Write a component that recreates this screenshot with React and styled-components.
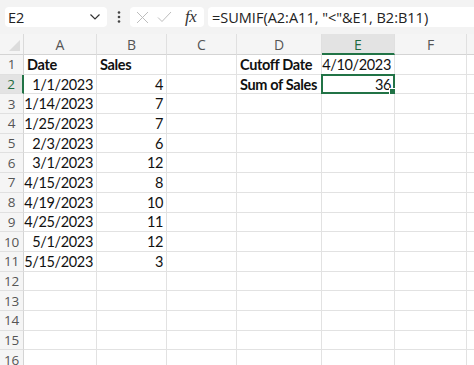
import React from "react";
import styled, { createGlobalStyle } from "styled-components";

const Global = createGlobalStyle`
  html, body { margin: 0; padding: 0; background: #ffffff; overflow: hidden; }
  #root { width: 474px; height: 365px; overflow: hidden; }
`;

const Page = styled.div`
  width: 474px;
  height: 365px;
  overflow: hidden;
  background: #ffffff;
  display: flex;
  flex-direction: column;
`;

const TopBar = styled.div`
  height: 34px;
  flex: none;
  box-sizing: border-box;
  background: #f3f3f3;
  display: flex;
  align-items: flex-start;
  padding: 7px 0 0 5px;
  font-family: "Open Sans", "Noto Sans", sans-serif;
  font-size: 14px;
  color: #222;
`;

const NameBox = styled.div`
  width: 102px;
  height: 20px;
  box-sizing: border-box;
  background: #fff;
  border-radius: 4px;
  display: flex;
  align-items: center;
  justify-content: space-between;
  padding: 0 6px 0 3px;
  font-size: 14.5px;
`;

const Kebab = styled.div`
  width: 23px;
  height: 20px;
  display: flex;
  align-items: center;
  justify-content: center;
`;

const FuncBox = styled.div`
  width: 74px;
  height: 20px;
  box-sizing: border-box;
  background: #fff;
  border-radius: 4px;
  display: flex;
  align-items: center;
  padding: 0 4px 0 6px;
  gap: 8px;
`;

const Fx = styled.span`
  font-family: "Liberation Serif", "DejaVu Serif", serif;
  font-style: italic;
  font-size: 17px;
  color: #333;
  margin-left: 5px;
  letter-spacing: -0.5px;
`;

const FormulaBox = styled.div`
  margin-left: 4px;
  flex: 1;
  height: 20px;
  box-sizing: border-box;
  background: #fff;
  border-radius: 4px 0 0 4px;
  display: flex;
  align-items: center;
  padding-left: 4px;
  font-size: 14.5px;
  white-space: nowrap;
`;

const Sheet = styled.div`
  display: grid;
  grid-template-columns: 24px 73px 70px 70px 85px 73px 72px 40px;
  grid-template-rows: 21px repeat(16, 19.7px);
  font-family: "Lato", "Open Sans", sans-serif;
`;

const Corner = styled.div`
  background: #f5f5f5;
  border-right: 1px solid #dadada;
  border-bottom: 1px solid #d4d4d4;
  display: flex;
  align-items: flex-end;
  justify-content: flex-end;
  padding: 0 3px 3px 0;
  box-sizing: border-box;
`;

const ColHead = styled.div`
  background: ${(p) => (p.$active ? "#e3e3e3" : "#f5f5f5")};
  border-right: 1px solid #e0e0e0;
  border-bottom: ${(p) => (p.$active ? "2px solid #217346" : "1px solid #d4d4d4")};
  box-sizing: border-box;
  display: flex;
  align-items: center;
  justify-content: center;
  font-family: "Open Sans", "Noto Sans", sans-serif;
  font-size: 14px;
  color: ${(p) => (p.$active ? "#1e6b3f" : "#555")};
  padding-top: ${(p) => (p.$active ? "1px" : "0")};
`;

const RowHead = styled.div`
  background: ${(p) => (p.$active ? "#e3e3e3" : "#f5f5f5")};
  border-right: ${(p) => (p.$active ? "2px solid #217346" : "1px solid #d4d4d4")};
  border-bottom: 1px solid #e0e0e0;
  box-sizing: border-box;
  display: flex;
  align-items: center;
  justify-content: center;
  font-family: "Open Sans", "Noto Sans", sans-serif;
  font-size: 13.5px;
  color: ${(p) => (p.$active ? "#1e6b3f" : "#555")};
  letter-spacing: -0.3px;
`;

const Cell = styled.div`
  position: relative;
  border-right: 1px solid #e2e2e2;
  border-bottom: 1px solid #e2e2e2;
  box-sizing: border-box;
  display: flex;
  align-items: center;
  justify-content: ${(p) => (p.$right ? "flex-end" : "flex-start")};
  padding: 0 3px;
  font-size: 14.5px;
  font-weight: ${(p) => (p.$bold ? 700 : 400)};
  color: #111;
  white-space: nowrap;
  overflow: visible;
  letter-spacing: -0.35px;
`;

const Selection = styled.div`
  position: absolute;
  left: -1px;
  top: -1px;
  right: -1px;
  bottom: -1px;
  border: 2px solid #217346;
  pointer-events: none;
`;

const Handle = styled.div`
  position: absolute;
  right: -3px;
  bottom: -3px;
  width: 5px;
  height: 5px;
  background: #217346;
  border: 1px solid #fff;
`;

const cols = ["A", "B", "C", "D", "E", "F", ""];

const data = [
  [{ t: "Date", b: true }, { t: "Sales", b: true }, {}, { t: "Cutoff Date", b: true }, { t: "4/10/2023", r: true }, {}],
  [{ t: "1/1/2023", r: true }, { t: "4", r: true }, {}, { t: "Sum of Sales", b: true }, { t: "36", r: true, sel: true }, {}],
  [{ t: "1/14/2023", r: true }, { t: "7", r: true }],
  [{ t: "1/25/2023", r: true }, { t: "7", r: true }],
  [{ t: "2/3/2023", r: true }, { t: "6", r: true }],
  [{ t: "3/1/2023", r: true }, { t: "12", r: true }],
  [{ t: "4/15/2023", r: true }, { t: "8", r: true }],
  [{ t: "4/19/2023", r: true }, { t: "10", r: true }],
  [{ t: "4/25/2023", r: true }, { t: "11", r: true }],
  [{ t: "5/1/2023", r: true }, { t: "12", r: true }],
  [{ t: "5/15/2023", r: true }, { t: "3", r: true }],
];

export default function App() {
  const rows = [];
  for (let r = 0; r < 16; r++) {
    const rowData = data[r] || [];
    rows.push(
      <RowHead key={`h${r}`} $active={r === 1}>
        {r + 1}
      </RowHead>
    );
    for (let c = 0; c < 7; c++) {
      const d = rowData[c] || {};
      rows.push(
        <Cell key={`c${r}-${c}`} $right={d.r} $bold={d.b}>
          {d.t}
          {d.sel && (
            <Selection>
              <Handle />
            </Selection>
          )}
        </Cell>
      );
    }
  }
  return (
    <Page>
      <Global />
      <TopBar>
        <NameBox>
          <span>E2</span>
          <svg width="12" height="8" viewBox="0 0 12 8">
            <path d="M1.5 1.5 L6 6 L10.5 1.5" fill="none" stroke="#333" strokeWidth="1.2" />
          </svg>
        </NameBox>
        <Kebab>
          <svg width="4" height="14" viewBox="0 0 4 14">
            <circle cx="2" cy="2.5" r="1.3" fill="#444" />
            <circle cx="2" cy="7" r="1.3" fill="#444" />
            <circle cx="2" cy="11.5" r="1.3" fill="#444" />
          </svg>
        </Kebab>
        <FuncBox>
          <svg width="13" height="13" viewBox="0 0 13 13">
            <path d="M1 1 L12 12 M12 1 L1 12" stroke="#bdbdbd" strokeWidth="1" fill="none" />
          </svg>
          <svg width="15" height="12" viewBox="0 0 15 12">
            <path d="M1 6.5 L5 10.5 L14 1" stroke="#bdbdbd" strokeWidth="1" fill="none" />
          </svg>
          <Fx>fx</Fx>
        </FuncBox>
        <FormulaBox>=SUMIF(A2:A11, "&lt;"&amp;E1, B2:B11)</FormulaBox>
      </TopBar>
      <Sheet>
        <Corner>
          <svg width="11" height="11" viewBox="0 0 11 11">
            <path d="M11 0 L11 11 L0 11 Z" fill="#dcdcdc" />
          </svg>
        </Corner>
        {cols.map((c, i) => (
          <ColHead key={i} $active={c === "E"}>
            {c}
          </ColHead>
        ))}
        {rows}
      </Sheet>
    </Page>
  );
}
